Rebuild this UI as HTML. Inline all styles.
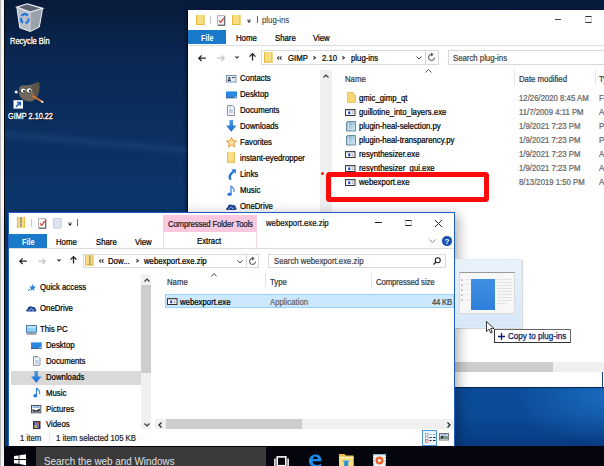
<!DOCTYPE html>
<html><head><meta charset="utf-8">
<style>
*{margin:0;padding:0;box-sizing:border-box}
html,body{width:604px;height:466px;overflow:hidden}
body{position:relative;font-family:"Liberation Sans",sans-serif;color:#000;
background:
 linear-gradient(185deg, rgba(0,0,0,0) 0px, rgba(0,0,0,0) 179px, rgba(100,160,230,0.10) 186px, rgba(0,0,0,0) 193px),
 linear-gradient(180deg,#081a3a 0px,#0a2853 60px,#0b2f5f 130px,#0b376e 215px,#0b3f7c 466px);}
.a{position:absolute}
.t{position:absolute;font-size:8.2px;line-height:10.1px;white-space:nowrap;-webkit-text-stroke:0.22px currentColor;transform:scaleX(0.95);transform-origin:0 0}
.g{color:#656565}
svg{position:absolute;overflow:visible}
</style></head><body>

<!-- left strip of another window -->
<div class="a" style="left:0;top:0;width:1px;height:466px;background:#b9b9b9"></div>
<div class="a" style="left:1px;top:0;width:3px;height:466px;background:#f4f4f4"></div>
<div class="a" style="left:4px;top:0;width:1px;height:466px;background:#050a12"></div>

<!-- wallpaper bottom-right brighter -->
<div class="a" style="left:454px;top:380px;width:150px;height:66px;background:radial-gradient(ellipse 90px 50px at 150px 15px,rgba(40,130,220,0.55),rgba(40,130,220,0) 100%),linear-gradient(180deg,#0a4d9a 0%,#0a4a96 55%,#083a80 100%)"></div>

<!-- Desktop icons -->
<svg style="left:0;top:0" width="60" height="50" viewBox="0 0 60 50">
  <path d="M16.8 7.1 L30.2 12 L30.2 31.5 L19.8 27.8Z" fill="#b9bfc7"/>
  <path d="M30.2 12 L42.6 8.3 L39.3 27 L30.2 31.5Z" fill="#9aa2ac"/>
  <path d="M16.8 7.1 L27.3 3.8 L42.6 8.3 L30.2 12Z" fill="#59626e" stroke="#e6e9ed" stroke-width="1.2"/>
  <path d="M16.8 7.1 L19.8 27.8 L30.2 31.5 L39.3 27 L42.6 8.3" fill="none" stroke="#eef0f3" stroke-width="1"/>
  <path d="M30.2 12 V31.5" stroke="#e0e3e7" stroke-width=".8"/>
  <path d="M21.5 16 A4 4 0 0 1 28 15.5" stroke="#1d74e0" stroke-width="2.2" fill="none"/>
  <path d="M28.5 18.5 A4 4 0 0 1 25.5 23" stroke="#1d74e0" stroke-width="2.2" fill="none"/>
  <path d="M23 22.5 A4 4 0 0 1 21 18" stroke="#1d74e0" stroke-width="2.2" fill="none"/>
</svg>
<div class="t" style="left:10.4px;top:35.9px;font-size:8.7px;color:#fff;transform:scaleX(0.865);transform-origin:0 0;-webkit-text-stroke:0.35px #fff;text-shadow:0 0 1px #000,1px 1px 1px #000">Recycle Bin</div>

<svg style="left:0;top:0" width="60" height="130" viewBox="0 0 60 130">
  <path d="M19 89 C19 85.5 23 84.5 27 85.5 C31 85 35.5 83.5 38.8 81.8 C40.5 88 39 97 33.5 100.5 C28 103 20.5 100 19 94 Z" fill="#70685a"/>
  <path d="M31 86 C34 85 36.5 83.5 38.8 81.8 C40 88 38.5 95 34.5 98.5 C35 93 33.5 89 31 86Z" fill="#5b5447"/>
  <path d="M16.5 92 L21 91" stroke="#2a2620" stroke-width="1.2"/>
  <circle cx="16.2" cy="92" r="1.6" fill="#f2f2f2"/>
  <ellipse cx="23.3" cy="90.6" rx="2.8" ry="2.5" fill="#fff" stroke="#2a2620" stroke-width=".7"/>
  <ellipse cx="29.2" cy="90.4" rx="2.9" ry="2.6" fill="#fff" stroke="#2a2620" stroke-width=".7"/>
  <circle cx="24" cy="91" r="1.1" fill="#111"/><circle cx="30" cy="90.8" r="1.1" fill="#111"/>
  <path d="M32 95.5 L41.5 101.3" stroke="#d9772b" stroke-width="1.8"/>
  <path d="M41 101 L43.3 102.4" stroke="#ece6da" stroke-width="1.8"/>
  <rect x="13.5" y="100.2" width="9.5" height="8.4" fill="#fdfdfd"/>
  <path d="M16 106.8 L20 102.8 M17 102.6 H20.3 V105.8" stroke="#1f5fc4" stroke-width="1.5" fill="none"/>
</svg>
<div class="t" style="left:8.1px;top:110.5px;font-size:8.7px;color:#fff;transform:scaleX(0.84);transform-origin:0 0;-webkit-text-stroke:0.35px #fff;text-shadow:0 0 1px #000,1px 1px 1px #000">GIMP 2.10.22</div>

<!-- ================= BACK WINDOW ================= -->
<div class="a" id="bw" style="left:187px;top:10px;width:417px;height:377px;background:#fff;border-left:1px solid #050505;box-shadow:-2px 0 3px rgba(0,0,0,0.25);"></div>

<!-- title row -->
<svg style="left:195.5px;top:14.6px" width="8.5" height="10" viewBox="0 0 8.5 10"><rect x="0" y="0" width="8.5" height="10" fill="#f8dc80"/><rect x="0" y="0" width="1" height="10" fill="#e8b93c"/><rect x="7.3" y="0" width="1.2" height="10" fill="#e9c04e"/><rect x="0" y="9" width="8.5" height="1" fill="#e8b93c"/></svg>
<div class="a" style="left:209.5px;top:16px;width:1px;height:8px;background:#c8c8c8"></div>
<svg style="left:217px;top:14.5px" width="8.5" height="10.5" viewBox="0 0 8.5 10.5"><path d="M0.5 0.5 H7.5 V10 H0.5Z" fill="#f7f7f7" stroke="#b5b5b5"/><path d="M7.8 1 V10.3 H1" stroke="#555" stroke-width="1" fill="none"/><path d="M2 5.5 L3.8 7.3 L6.8 3" stroke="#d33a2a" stroke-width="1.2" fill="none"/></svg>
<svg style="left:231.6px;top:14.6px" width="8.5" height="10" viewBox="0 0 8.5 10"><rect x="0" y="0" width="8.5" height="10" fill="#f8dc80"/><rect x="0" y="0" width="1" height="10" fill="#e8b93c"/><rect x="7.3" y="0" width="1.2" height="10" fill="#e9c04e"/><rect x="0" y="9" width="8.5" height="1" fill="#e8b93c"/></svg>
<svg style="left:246.5px;top:18.5px" width="4" height="4" viewBox="0 0 4 4"><path d="M0 0.5 H4" stroke="#aaa" stroke-width=".8"/><path d="M0 1.6 L4 1.6 L2 3.9Z" fill="#222"/></svg>
<div class="a" style="left:256.5px;top:16px;width:1px;height:6.5px;background:#666"></div>
<div class="t" style="left:262px;top:16px;color:#444;-webkit-text-stroke:0.1px #444">plug-ins</div>
<div class="a" style="left:555px;top:19px;width:6px;height:1px;background:#444"></div>
<div class="a" style="left:584.5px;top:16px;width:7px;height:7px;border:1px solid #d0d0d0;border-top-color:#333;border-bottom-color:#333"></div>

<!-- ribbon tabs -->
<div class="a" style="left:188px;top:30.3px;width:38px;height:14.2px;background:#1979ca"></div>
<div class="t" style="left:201px;top:34.1px;color:#fff;font-weight:bold;font-size:8.2px;transform:scaleX(0.88);-webkit-text-stroke:0px #fff">File</div>
<div class="t" style="left:235.6px;top:34.1px">Home</div>
<div class="t" style="left:275px;top:34.1px">Share</div>
<div class="t" style="left:313px;top:34.1px">View</div>
<div class="a" style="left:189px;top:45px;width:415px;height:1px;background:#dadbdc"></div>

<!-- nav row -->
<svg style="left:197.5px;top:54.5px" width="8" height="6.5" viewBox="0 0 8 6.5"><path d="M7.8 3.2 H0.8 M3.6 0.4 L0.8 3.2 L3.6 6" stroke="#222" stroke-width="1.25" fill="none"/></svg>
<svg style="left:217px;top:54.5px" width="8" height="6.5" viewBox="0 0 8 6.5"><path d="M0.2 3.2 H7.2 M4.4 0.4 L7.2 3.2 L4.4 6" stroke="#c4c4c4" stroke-width="1.2" fill="none"/></svg>
<svg style="left:235px;top:56px" width="4" height="2.5" viewBox="0 0 4 2.5"><path d="M0.4 0.4 L2 2 L3.6 0.4" stroke="#333" stroke-width="1.2" fill="none"/></svg>
<svg style="left:248.5px;top:53px" width="7" height="7.5" viewBox="0 0 7 7.5"><path d="M3.5 7.5 V0.8 M0.5 3.6 L3.5 0.6 L6.5 3.6" stroke="#222" stroke-width="1.3" fill="none"/></svg>
<div class="a" style="left:261px;top:50px;width:178px;height:15px;border:1px solid #d9d9d9;background:#fff"></div>
<div class="a" style="left:425px;top:51px;width:1px;height:13px;background:#d9d9d9"></div>
<svg style="left:264px;top:52px" width="8.5" height="10.5" viewBox="0 0 8.5 10.5"><rect x="0" y="0" width="8.5" height="10.5" fill="#f8dc80"/><rect x="0" y="0" width="1" height="10.5" fill="#e8b93c"/><rect x="7.3" y="0" width="1.2" height="10.5" fill="#e9c04e"/><rect x="0" y="9.5" width="8.5" height="1" fill="#e8b93c"/></svg>
<svg style="left:277.2px;top:56.3px" width="5" height="4" viewBox="0 0 5 4"><path d="M2 0.3 L0.5 2 L2 3.7 M4.5 0.3 L3 2 L4.5 3.7" stroke="#333" stroke-width="1.1" fill="none"/></svg>
<div class="t" style="left:287.5px;top:53.5px">GIMP</div>
<svg style="left:312.6px;top:56px" width="3" height="3.6" viewBox="0 0 3 3.6"><path d="M0.4 0.3 L2.4 1.8 L0.4 3.3" stroke="#333" stroke-width="1.1" fill="none"/></svg>
<div class="t" style="left:321.5px;top:53.5px">2.10</div>
<svg style="left:341.8px;top:56px" width="3" height="3.6" viewBox="0 0 3 3.6"><path d="M0.4 0.3 L2.4 1.8 L0.4 3.3" stroke="#333" stroke-width="1.1" fill="none"/></svg>
<div class="t" style="left:351px;top:53.5px">plug-ins</div>
<svg style="left:416px;top:56px" width="6" height="4" viewBox="0 0 6 4"><path d="M0.5 0.5 L3 3 L5.5 0.5" stroke="#444" stroke-width="1" fill="none"/></svg>
<svg style="left:428px;top:53px" width="8" height="9" viewBox="0 0 8 9"><path d="M6.5 4.5 A3 3 0 1 1 4 1.5" stroke="#444" stroke-width="1" fill="none"/><path d="M3 0 L5.2 1.5 L3 3" stroke="#444" stroke-width="1" fill="none"/></svg>
<div class="a" style="left:447.5px;top:50px;width:170px;height:15px;border:1px solid #d9d9d9;background:#fff"></div>
<div class="t" style="left:453px;top:53.5px;color:#444">Search plug-ins</div>

<!-- nav pane -->
<div class="a" style="left:320px;top:70px;width:12px;height:320px;background:#f0f0f0"></div>
<svg style="left:323px;top:74px" width="6" height="4" viewBox="0 0 6 4"><path d="M0.5 3.5 L3 1 L5.5 3.5" stroke="#333" stroke-width="1.1" fill="none"/></svg>
<div class="t" style="left:240.3px;top:74.0px">Contacts</div>
<div class="t" style="left:240.3px;top:90.1px">Desktop</div>
<div class="t" style="left:240.3px;top:106.0px">Documents</div>
<div class="t" style="left:240.3px;top:121.6px">Downloads</div>
<div class="t" style="left:240.3px;top:138.0px">Favorites</div>
<div class="t" style="left:240.3px;top:153.6px">instant-eyedropper</div>
<div class="t" style="left:240.3px;top:169.8px">Links</div>
<div class="t" style="left:240.3px;top:186.0px">Music</div>
<div class="t" style="left:240.3px;top:201.6px">OneDrive</div>
<!-- nav icons -->

<svg style="left:226.2px;top:75.3px" width="10.5" height="7.5" viewBox="0 0 10.5 7.5"><rect x="0.5" y="0.5" width="9.5" height="6.5" fill="#e4eef8" stroke="#7894b4"/><circle cx="3.3" cy="3" r="1.1" fill="#2e3440"/><rect x="1.8" y="4.4" width="3" height="1.6" fill="#2e3440"/><path d="M6 2.6 H8.8" stroke="#3a4050" stroke-width="1"/></svg>
<svg style="left:226.2px;top:90.9px" width="11" height="7.2" viewBox="0 0 11 7.2"><rect x="0" y="0" width="11" height="7.2" fill="#2a86e0"/><rect x="0" y="0" width="11" height="1" fill="#7dbdf3"/><rect x="0" y="6.2" width="11" height="1" fill="#3c5a80"/><rect x="8.5" y="5.6" width="2" height="1" fill="#dfe8f0"/></svg>
<svg style="left:227.3px;top:105px" width="8" height="11" viewBox="0 0 8 11"><path d="M0.5 0.5 H5.5 L7.5 2.5 V10.5 H0.5Z" fill="#fbfbfb" stroke="#8a919b"/><rect x="2" y="4" width="4" height="4.5" fill="#b9d2ec"/><path d="M2.5 2.5 L4 1.5" stroke="#4a8ad0" stroke-width=".8"/></svg>
<svg style="left:226.2px;top:120.2px" width="10.5" height="12" viewBox="0 0 10.5 12"><defs><linearGradient id="dl" x1="0" y1="0" x2="0" y2="1"><stop offset="0" stop-color="#4a9be8"/><stop offset="1" stop-color="#1b6ad0"/></linearGradient></defs><path d="M3.5 0 H7 V5.6 H10.5 L5.25 11.8 L0 5.6 H3.5Z" fill="url(#dl)"/></svg>
<svg style="left:226px;top:137.3px" width="11" height="10.5" viewBox="0 0 11 10.5"><path d="M5.5 0.4 L7 3.8 L10.6 4 L7.8 6.4 L8.8 10 L5.5 8 L2.2 10 L3.2 6.4 L0.4 4 L4 3.8Z" fill="#fbe2a6" stroke="#de8f33" stroke-width=".9"/></svg>
<svg style="left:227px;top:152.4px" width="8" height="10.7" viewBox="0 0 8 10.7"><rect x="0" y="0" width="8" height="10.7" fill="#f9de87"/><rect x="0" y="0" width="1" height="10.7" fill="#eac04f"/><rect x="6.8" y="0" width="1.2" height="10.7" fill="#eac25a"/><rect x="0" y="9.7" width="8" height="1" fill="#e6b845"/></svg>
<svg style="left:227.5px;top:168.8px" width="8" height="11" viewBox="0 0 8 11"><path d="M3.2 0.2 H7.8 V4.8 L6.3 3.3 L4 5.6 C2.8 6.8 2.8 8.5 3.6 10.8 L1.2 10.8 C0 8.5 0.2 6 2.4 3.8 L4.7 1.7Z" fill="#2477d9"/></svg>
<svg style="left:227px;top:184.5px" width="9" height="12" viewBox="0 0 9 12"><path d="M4 1 V9" stroke="#2a7dde" stroke-width="1.2"/><ellipse cx="2.6" cy="9.3" rx="2.2" ry="1.8" fill="#2a7dde"/><path d="M4 1 C6 3 8 3.5 7 7" stroke="#2a7dde" stroke-width="1.1" fill="none"/></svg>
<svg style="left:226px;top:202.5px" width="10.5" height="7.2" viewBox="0 0 10.5 7.2"><path d="M1 7 C-0.3 7 -0.2 4.4 1.6 4.5 C1.8 2 4.4 0.5 6.3 2.3 C8.2 1.6 10 2.8 9.7 4.6 C10.9 4.8 10.8 7 9.4 7Z" fill="#173f90"/><path d="M3 6.3 C3.4 4.6 4.8 3.6 6.3 4.2 M6 6.3 C6.3 5.2 7.4 4.8 8.4 5.2" stroke="#e8eef8" stroke-width=".8" fill="none"/></svg>

<svg style="left:425px;top:69px" width="7" height="4" viewBox="0 0 7 4"><path d="M0.5 3.5 L3.5 0.5 L6.5 3.5" stroke="#555" stroke-width="1" fill="none"/></svg>
<div class="t" style="left:344.6px;top:74.7px;color:#333a48">Name</div>
<div class="a" style="left:514px;top:70px;width:1px;height:16px;background:#e5e5e5"></div>
<div class="t" style="left:518.7px;top:74.7px;color:#333a48">Date modified</div>
<div class="a" style="left:594.5px;top:70px;width:1px;height:16px;background:#e5e5e5"></div>
<div class="t" style="left:599px;top:74.7px;color:#333a48">Type</div>
<div class="t" style="left:358.8px;top:94.00px">gmic_gimp_qt</div>
<div class="t g" style="left:518.9px;top:94.00px">12/26/2020 8:45 AM</div>
<div class="t g" style="left:598.6px;top:94.00px">File folder</div>
<svg style="left:346.5px;top:92.10px" width="9" height="11" viewBox="0 0 9 11"><path d="M0.5 0.5 H6.5 V3 H8.5 V10.5 H0.5Z" fill="#f7d774" stroke="#e9c45a"/></svg>
<div class="t" style="left:358.8px;top:108.05px">guillotine_into_layers.exe</div>
<div class="t g" style="left:518.9px;top:108.05px">11/7/2009 4:11 PM</div>
<div class="t g" style="left:598.6px;top:108.05px">Application</div>
<svg style="left:345.3px;top:109.15px" width="10.5" height="7" viewBox="0 0 10.5 7"><rect x="0.5" y="0.5" width="9.5" height="6" fill="#fff" stroke="#33343c"/><rect x="0.5" y="0.5" width="9.5" height="0.8" fill="#55565e"/><rect x="3.2" y="2.4" width="2" height="2.8" fill="#1a3cc0"/><rect x="6.5" y="2.5" width="2" height="0.9" fill="#8a8a8a"/><rect x="6.5" y="4.3" width="2" height="0.9" fill="#8a8a8a"/></svg>
<div class="t" style="left:358.8px;top:122.10px">plugin-heal-selection.py</div>
<div class="t g" style="left:518.9px;top:122.10px">1/9/2021 7:23 PM</div>
<div class="t g" style="left:598.6px;top:122.10px">PY File</div>
<svg style="left:346px;top:120.70px" width="10" height="10.5" viewBox="0 0 10 10.5"><defs><linearGradient id="pyg" x1="0" y1="0" x2="1" y2="1"><stop offset="0" stop-color="#7fa6c2"/><stop offset=".6" stop-color="#b7d5e6"/><stop offset="1" stop-color="#d9ebf4"/></linearGradient></defs><path d="M1.5 0.5 H9.5 V10 H0.5 V1.5Z" fill="url(#pyg)" stroke="#5f839e" stroke-width=".9"/><path d="M2.3 2 V8.8" stroke="#e8f3fa" stroke-width=".9"/></svg>
<div class="t" style="left:358.8px;top:136.15px">plugin-heal-transparency.py</div>
<div class="t g" style="left:518.9px;top:136.15px">1/9/2021 7:23 PM</div>
<div class="t g" style="left:598.6px;top:136.15px">PY File</div>
<svg style="left:346px;top:134.75px" width="10" height="10.5" viewBox="0 0 10 10.5"><defs><linearGradient id="pyg" x1="0" y1="0" x2="1" y2="1"><stop offset="0" stop-color="#7fa6c2"/><stop offset=".6" stop-color="#b7d5e6"/><stop offset="1" stop-color="#d9ebf4"/></linearGradient></defs><path d="M1.5 0.5 H9.5 V10 H0.5 V1.5Z" fill="url(#pyg)" stroke="#5f839e" stroke-width=".9"/><path d="M2.3 2 V8.8" stroke="#e8f3fa" stroke-width=".9"/></svg>
<div class="t" style="left:358.8px;top:150.20px">resynthesizer.exe</div>
<div class="t g" style="left:518.9px;top:150.20px">1/9/2021 7:23 PM</div>
<div class="t g" style="left:598.6px;top:150.20px">Application</div>
<svg style="left:345.3px;top:151.30px" width="10.5" height="7" viewBox="0 0 10.5 7"><rect x="0.5" y="0.5" width="9.5" height="6" fill="#fff" stroke="#33343c"/><rect x="0.5" y="0.5" width="9.5" height="0.8" fill="#55565e"/><rect x="3.2" y="2.4" width="2" height="2.8" fill="#1a3cc0"/><rect x="6.5" y="2.5" width="2" height="0.9" fill="#8a8a8a"/><rect x="6.5" y="4.3" width="2" height="0.9" fill="#8a8a8a"/></svg>
<div class="t" style="left:358.8px;top:164.25px">resynthesizer_gui.exe</div>
<div class="t g" style="left:518.9px;top:164.25px">1/9/2021 7:23 PM</div>
<div class="t g" style="left:598.6px;top:164.25px">Application</div>
<svg style="left:345.3px;top:165.35px" width="10.5" height="7" viewBox="0 0 10.5 7"><rect x="0.5" y="0.5" width="9.5" height="6" fill="#fff" stroke="#33343c"/><rect x="0.5" y="0.5" width="9.5" height="0.8" fill="#55565e"/><rect x="3.2" y="2.4" width="2" height="2.8" fill="#1a3cc0"/><rect x="6.5" y="2.5" width="2" height="0.9" fill="#8a8a8a"/><rect x="6.5" y="4.3" width="2" height="0.9" fill="#8a8a8a"/></svg>
<div class="t" style="left:358.8px;top:178.30px">webexport.exe</div>
<div class="t g" style="left:518.9px;top:178.30px">8/13/2019 1:50 PM</div>
<div class="t g" style="left:598.6px;top:178.30px">Application</div>
<svg style="left:345.3px;top:179.40px" width="10.5" height="7" viewBox="0 0 10.5 7"><rect x="0.5" y="0.5" width="9.5" height="6" fill="#fff" stroke="#33343c"/><rect x="0.5" y="0.5" width="9.5" height="0.8" fill="#55565e"/><rect x="3.2" y="2.4" width="2" height="2.8" fill="#1a3cc0"/><rect x="6.5" y="2.5" width="2" height="0.9" fill="#8a8a8a"/><rect x="6.5" y="4.3" width="2" height="0.9" fill="#8a8a8a"/></svg>

<div class="a" style="left:454px;top:362px;width:150px;height:10px;background:#f0f0f0"></div>
<div class="a" style="left:454px;top:362px;width:99px;height:10px;background:#cdcdcd"></div>
<div class="a" style="left:602px;top:372px;width:1px;height:15px;background:#1b3d8a"></div>
<div class="a" style="left:188px;top:387px;width:416px;height:1px;background:#0a2553"></div>


<!-- red rectangle -->
<div class="a" style="left:326px;top:172px;width:162.5px;height:29.5px;border:5px solid #fa0c0c;border-radius:3.5px"></div>
<div class="a" style="left:321px;top:171.7px;width:3px;height:3px;border-radius:50%;background:#ee2020"></div>

<!-- ================= FRONT WINDOW ================= -->
<div class="a" style="left:8px;top:212px;width:447px;height:234px;background:#fff;border:1px solid #1f5fc4;border-bottom:none;box-shadow:3px 3px 12px rgba(0,0,0,0.35)"></div>
<!-- QAT -->
<svg style="left:16.9px;top:217px" width="8" height="11" viewBox="0 0 8 11"><rect x="0" y="0" width="8" height="11" fill="#f8dc80"/><rect x="0" y="0" width="1" height="11" fill="#e8b93c"/><rect x="7" y="0" width="1" height="11" fill="#e9c04e"/><path d="M4 0.5 V10.5" stroke="#4a5a9a" stroke-width="1.4" stroke-dasharray="1.2 0.8"/></svg>
<div class="a" style="left:30.5px;top:219px;width:1px;height:8px;background:#c8c8c8"></div>
<svg style="left:38.4px;top:218px" width="8.5" height="10.5" viewBox="0 0 8.5 10.5"><path d="M0.5 0.5 H7.5 V10 H0.5Z" fill="#f7f7f7" stroke="#b5b5b5"/><path d="M7.8 1 V10.3 H1" stroke="#555" stroke-width="1" fill="none"/><path d="M2 5.5 L3.8 7.3 L6.8 3" stroke="#d33a2a" stroke-width="1.2" fill="none"/></svg>
<svg style="left:53px;top:218px" width="8.6" height="10.5" viewBox="0 0 8.6 10.5"><rect x="0" y="0" width="8.6" height="10.5" fill="#dde4f1"/><path d="M0.5 0.5 H8.1 V10 H0.5Z" fill="none" stroke="#c5cfe2"/></svg>
<svg style="left:67.6px;top:222px" width="4" height="4" viewBox="0 0 4 4"><path d="M0 0.5 H4" stroke="#aaa" stroke-width=".8"/><path d="M0 1.6 L4 1.6 L2 3.9Z" fill="#222"/></svg>
<div class="a" style="left:77.3px;top:218.6px;width:1px;height:7.5px;background:#666"></div>
<div class="a" style="left:163px;top:215px;width:94px;height:17px;background:#f9c8de"></div>
<div class="t" style="left:168px;top:220.2px;color:#1a1a1a;letter-spacing:-0.17px">Compressed Folder Tools</div>
<div class="t" style="left:266px;top:219.3px;color:#111">webexport.exe.zip</div>
<div class="a" style="left:404.5px;top:219.5px;width:7px;height:6.5px;border:1px solid #c8c8c8;border-top-color:#222;border-bottom-color:#222"></div>
<svg style="left:435px;top:219.5px" width="7" height="7" viewBox="0 0 7 7"><path d="M0 0 L7 7 M7 0 L0 7" stroke="#222" stroke-width="1"/></svg>
<div class="a" style="left:375px;top:222px;width:7px;height:1px;background:#222"></div>
<!-- tabs -->
<div class="a" style="left:9px;top:233.5px;width:38px;height:14.5px;background:#1979ca"></div>
<div class="t" style="left:22.4px;top:237.6px;color:#fff;font-weight:bold;font-size:8.2px;transform:scaleX(0.88);-webkit-text-stroke:0px #fff">File</div>
<div class="t" style="left:56px;top:237.6px">Home</div>
<div class="t" style="left:95.5px;top:237.6px">Share</div>
<div class="t" style="left:135px;top:237.6px">View</div>
<div class="a" style="left:163px;top:232px;width:94px;height:16.5px;border:1px solid #f2dbe6;border-top:none;border-bottom:none"></div>
<div class="t" style="left:196.5px;top:237.2px">Extract</div>
<svg style="left:429px;top:238.5px" width="7" height="4" viewBox="0 0 7 4"><path d="M0.5 0.5 L3.5 3.5 L6.5 0.5" stroke="#888" fill="none"/></svg>
<svg style="left:441.5px;top:235.5px" width="10" height="10" viewBox="0 0 10 10"><circle cx="5" cy="5" r="4.8" fill="#1752b8" stroke="#0d3d94" stroke-width=".6"/><text x="5" y="8.4" font-family="Liberation Sans" font-weight="bold" font-size="8" fill="#fff" text-anchor="middle">?</text></svg>
<div class="a" style="left:9px;top:248px;width:445px;height:1px;background:#dadbdc"></div>
<!-- nav row -->
<svg style="left:18.7px;top:257.5px" width="8" height="6.5" viewBox="0 0 8 6.5"><path d="M7.8 3.2 H0.8 M3.6 0.4 L0.8 3.2 L3.6 6" stroke="#222" stroke-width="1.25" fill="none"/></svg>
<svg style="left:38.2px;top:257.5px" width="8" height="6.5" viewBox="0 0 8 6.5"><path d="M0.2 3.2 H7.2 M4.4 0.4 L7.2 3.2 L4.4 6" stroke="#c4c4c4" stroke-width="1.2" fill="none"/></svg>
<svg style="left:56.5px;top:259px" width="4" height="2.5" viewBox="0 0 4 2.5"><path d="M0.4 0.4 L2 2 L3.6 0.4" stroke="#333" stroke-width="1.2" fill="none"/></svg>
<svg style="left:70px;top:256px" width="7" height="7.5" viewBox="0 0 7 7.5"><path d="M3.5 7.5 V0.8 M0.5 3.6 L3.5 0.6 L6.5 3.6" stroke="#222" stroke-width="1.3" fill="none"/></svg>
<div class="a" style="left:82.5px;top:253.5px;width:176px;height:14px;border:1px solid #d9d9d9"></div>
<div class="a" style="left:246px;top:255px;width:1px;height:11.5px;background:#d9d9d9"></div>
<svg style="left:85px;top:255.2px" width="8.5" height="10.5" viewBox="0 0 8.5 10.5"><rect x="0" y="0" width="8.5" height="10.5" fill="#f8dc80"/><rect x="0" y="0" width="1" height="10.5" fill="#e8b93c"/><rect x="7.3" y="0" width="1.2" height="10.5" fill="#e9c04e"/><rect x="0" y="9.5" width="8.5" height="1" fill="#e8b93c"/><path d="M4.8 0.5 V10" stroke="#5a6aa8" stroke-width="1.3" stroke-dasharray="1.2 0.8"/></svg>
<svg style="left:99px;top:259.3px" width="5" height="4" viewBox="0 0 5 4"><path d="M2 0.3 L0.5 2 L2 3.7 M4.5 0.3 L3 2 L4.5 3.7" stroke="#333" stroke-width="1.1" fill="none"/></svg>
<div class="t" style="left:108px;top:256.8px">Dow...</div>
<svg style="left:136px;top:259px" width="3" height="3.6" viewBox="0 0 3 3.6"><path d="M0.4 0.3 L2.4 1.8 L0.4 3.3" stroke="#333" stroke-width="1.1" fill="none"/></svg>
<div class="t" style="left:144px;top:256.8px">webexport.exe.zip</div>
<svg style="left:236.5px;top:259.5px" width="6" height="4" viewBox="0 0 6 4"><path d="M0.5 0.5 L3 3 L5.5 0.5" stroke="#444" fill="none"/></svg>
<svg style="left:249px;top:256.5px" width="8" height="9" viewBox="0 0 8 9"><path d="M6.5 4.5 A3 3 0 1 1 4 1.5" stroke="#444" fill="none"/><path d="M3 0 L5.2 1.5 L3 3" stroke="#444" fill="none"/></svg>
<div class="a" style="left:268px;top:253.5px;width:177.5px;height:14px;border:1px solid #d9d9d9"></div>
<div class="t" style="left:273.8px;top:256.8px;color:#444">Search webexport.exe.zip</div>
<svg style="left:433px;top:256.5px" width="8" height="8" viewBox="0 0 8 8"><circle cx="4.8" cy="3.2" r="2.5" fill="none" stroke="#222" stroke-width="1.1"/><path d="M3 5 L0.5 7.5" stroke="#222" stroke-width="1.3"/></svg>
<!-- nav pane -->
<div class="a" style="left:141px;top:274px;width:10px;height:155px;background:#f0f0f0"></div>
<div class="a" style="left:141px;top:284.5px;width:10px;height:88px;background:#cdcdcd"></div>
<svg style="left:144px;top:278px" width="6" height="4" viewBox="0 0 6 4"><path d="M0.5 3.5 L3 1 L5.5 3.5" stroke="#333" stroke-width="1.1" fill="none"/></svg>
<svg style="left:143.5px;top:422.5px" width="6" height="4" viewBox="0 0 6 4"><path d="M0.5 0.5 L3 3 L5.5 0.5" stroke="#333" stroke-width="1.1" fill="none"/></svg>
<div class="a" style="left:11px;top:370.5px;width:130px;height:14px;background:#d9d9d9"></div>
<div class="t" style="left:40.0px;top:282.6px">Quick access</div>
<div class="t" style="left:40.0px;top:303.6px">OneDrive</div>
<div class="t" style="left:40.0px;top:324.8px">This PC</div>
<div class="t" style="left:46.0px;top:340.6px">Desktop</div>
<div class="t" style="left:46.0px;top:356.6px">Documents</div>
<div class="t" style="left:46.0px;top:372.6px">Downloads</div>
<div class="t" style="left:46.0px;top:388.6px">Music</div>
<div class="t" style="left:46.0px;top:404.6px">Pictures</div>
<div class="t" style="left:46.0px;top:420.4px">Videos</div>

<svg style="left:28.2px;top:284px" width="8" height="7" viewBox="0 0 8 7"><path d="M4.6 0 L5.5 2.4 L8 2.6 L6.1 4.2 L6.7 6.8 L4.6 5.4 L2.5 6.8 L3.1 4.2 L1.2 2.6 L3.7 2.4Z" fill="#2d7fd8"/><path d="M0 6.8 L2.6 4.6" stroke="#2d7fd8" stroke-width="1"/></svg>
<svg style="left:26px;top:305px" width="10.5" height="6.8" viewBox="0 0 10.5 6.8"><path d="M1 6.6 C-0.3 6.6 -0.2 4.1 1.6 4.2 C1.8 1.8 4.4 0.4 6.3 2.1 C8.2 1.5 10 2.6 9.7 4.3 C10.9 4.5 10.8 6.6 9.4 6.6Z" fill="#173f90"/><path d="M3 6 C3.4 4.3 4.8 3.4 6.3 4 M6 6 C6.3 4.9 7.4 4.5 8.4 4.9" stroke="#e8eef8" stroke-width=".8" fill="none"/></svg>
<svg style="left:26px;top:325px" width="11" height="9.5" viewBox="0 0 11 9.5"><rect x="0.5" y="0.5" width="10" height="6.8" fill="#8fd0f5" stroke="#4a7fae"/><rect x="1.3" y="1.3" width="8.4" height="1.5" fill="#c4e8fb"/><rect x="4.5" y="7.3" width="2" height="1" fill="#7a8a9a"/><rect x="0.5" y="8.5" width="10" height="1" fill="#555d66"/></svg>
<svg style="left:31.2px;top:342.2px" width="10.7" height="6.8" viewBox="0 0 10.7 6.8"><rect x="0" y="0" width="10.7" height="6.8" fill="#2a86e0"/><rect x="0" y="0" width="10.7" height="1" fill="#7dbdf3"/><rect x="0" y="5.8" width="10.7" height="1" fill="#3c5a80"/><rect x="8.3" y="5.2" width="2" height="1" fill="#dfe8f0"/></svg>
<svg style="left:32.9px;top:356.4px" width="7.5" height="9.8" viewBox="0 0 7.5 9.8"><path d="M0.5 0.5 H5 L7 2.5 V9.3 H0.5Z" fill="#fbfbfb" stroke="#8a919b"/><rect x="2" y="3.8" width="3.6" height="4" fill="#b9d2ec"/><path d="M2.3 2.4 L3.8 1.4" stroke="#4a8ad0" stroke-width=".8"/></svg>
<svg style="left:31.2px;top:371.3px" width="10.5" height="12" viewBox="0 0 10.5 12"><path d="M3.5 0 H7 V5.6 H10.5 L5.25 11.8 L0 5.6 H3.5Z" fill="url(#dl)"/></svg>
<svg style="left:33px;top:387px" width="8" height="11" viewBox="0 0 8 11"><path d="M3.5 1 V8.5" stroke="#2a7dde" stroke-width="1.2"/><ellipse cx="2.3" cy="8.8" rx="2" ry="1.7" fill="#2a7dde"/><path d="M3.5 1 C5.5 3 7.5 3.5 6.5 7" stroke="#2a7dde" stroke-width="1.1" fill="none"/></svg>
<svg style="left:31.2px;top:405px" width="10.3" height="8.3" viewBox="0 0 10.3 8.3"><rect x="0.5" y="0.5" width="9.3" height="7.3" fill="#fff" stroke="#4a505a"/><rect x="1.5" y="1.6" width="7.3" height="1" fill="#3b78c8"/><path d="M1.5 6.8 V4 L5 5.5 L8.8 3.6 V6.8Z" fill="#2a3444"/></svg>
<svg style="left:32.9px;top:420.8px" width="7.5" height="8" viewBox="0 0 7.5 8"><rect x="0" y="0" width="7.5" height="8" fill="#343048"/><rect x="1.5" y="1" width="4.5" height="6" fill="#5d7ad0"/><rect x="1.5" y="4" width="2.2" height="3" fill="#e8b23a"/><rect x="3.7" y="1" width="2.3" height="2.5" fill="#d65a3a"/></svg>
<!-- content pane -->
<svg style="left:211px;top:272.5px" width="6" height="4" viewBox="0 0 6 4"><path d="M0.5 3.5 L3 0.5 L5.5 3.5" stroke="#555" fill="none"/></svg>
<div class="t" style="left:166.5px;top:278.2px;color:#333a48">Name</div>
<div class="a" style="left:264.5px;top:273px;width:1px;height:16px;background:#e5e5e5"></div>
<div class="t" style="left:269.8px;top:278.2px;color:#333a48">Type</div>
<div class="a" style="left:371px;top:273px;width:1px;height:16px;background:#e5e5e5"></div>
<div class="t" style="left:376.4px;top:278.2px;color:#333a48;letter-spacing:-0.11px">Compressed size</div>
<div class="a" style="left:164.5px;top:294px;width:289px;height:14.3px;background:#cce8ff;border:1px solid #99d1ff"></div>
<svg style="left:166.5px;top:298px" width="10.5" height="7" viewBox="0 0 10.5 7"><rect x="0.5" y="0.5" width="9.5" height="6" fill="#fff" stroke="#33343c"/><rect x="0.5" y="0.5" width="9.5" height="0.8" fill="#55565e"/><rect x="3.2" y="2.4" width="2" height="2.8" fill="#1a3cc0"/><rect x="6.5" y="2.5" width="2" height="0.9" fill="#8a8a8a"/><rect x="6.5" y="4.3" width="2" height="0.9" fill="#8a8a8a"/></svg>
<div class="t" style="left:179.7px;top:297.7px">webexport.exe</div>
<div class="t g" style="left:269.8px;top:297.7px">Application</div>
<div class="t g" style="left:432.4px;top:297.7px;color:#444;letter-spacing:-0.25px">44 KB</div>
<!-- h scrollbar -->
<div class="a" style="left:155px;top:419px;width:299px;height:10px;background:#f0f0f0"></div>
<div class="a" style="left:166px;top:419px;width:136px;height:10px;background:#cdcdcd"></div>
<svg style="left:158px;top:421.5px" width="4" height="6" viewBox="0 0 4 6"><path d="M3.5 0.5 L1 3 L3.5 5.5" stroke="#222" stroke-width="1.2" fill="none"/></svg>
<svg style="left:446.5px;top:421.5px" width="4" height="6" viewBox="0 0 4 6"><path d="M0.5 0.5 L3 3 L0.5 5.5" stroke="#222" stroke-width="1.2" fill="none"/></svg>
<!-- status bar -->
<div class="t" style="left:20px;top:434.2px;color:#222">1 item</div>
<div class="a" style="left:48.5px;top:433.5px;width:1px;height:10px;background:#e8e8e8"></div>
<div class="t" style="left:55.5px;top:434.2px;color:#222">1 item selected 105 KB</div>
<div class="a" style="left:422.3px;top:430px;width:14.7px;height:16px;border:1px solid #4b97d9;background:#eef6fd"></div>
<svg style="left:424.5px;top:433px" width="11" height="10" viewBox="0 0 11 10"><rect x="0.5" y="0.5" width="2.5" height="2.5" fill="#fff" stroke="#888" stroke-width=".6"/><rect x="0.5" y="4" width="2.5" height="2.5" fill="#fff" stroke="#888" stroke-width=".6"/><rect x="0.5" y="7" width="2.5" height="2.5" fill="#fff" stroke="#c44" stroke-width=".6"/><path d="M4.5 1.5 H6.5 M8 1.5 H10.5" stroke="#9ab" stroke-width="1"/><path d="M4.5 4.5 H6.5 M8 4.5 H10.5 M4.5 7.5 H6.5 M8 7.5 H10.5" stroke="#222" stroke-width="1"/></svg>
<svg style="left:439.2px;top:433.4px" width="10" height="7.5" viewBox="0 0 10 7.5"><rect x="0.5" y="0.5" width="9" height="6.5" fill="#fff" stroke="#777"/><rect x="1.5" y="1.5" width="7" height="0.8" fill="#3a6cc8"/><path d="M1.5 3 H8.5 V6 H1.5Z" fill="#2c3d2c"/><path d="M5 3 H8.5 V6 H3Z" fill="#7aa08a"/></svg>

<!-- drag ghost -->
<div class="a" style="left:455px;top:258.5px;width:67px;height:69.5px;background:linear-gradient(180deg,#eaf2fb 0%,#e0ecf8 50%,#d6e7f7 100%);border:1px solid #e3ecf6;box-shadow:1px 1px 1px rgba(0,0,0,0.15)"></div>
<div class="a" style="left:458.5px;top:271.5px;width:56.5px;height:42px;background:#f7f7f7;border:1px solid #dadada;border-top:1.5px solid #9a9a9a"></div>
<div class="a" style="left:471px;top:278.5px;width:24px;height:31.5px;background:linear-gradient(180deg,#3f90e4,#2f7fdb)"></div>
<svg style="left:461px;top:276px" width="54" height="36" viewBox="0 0 54 36">
 <g fill="#c9c9c9"><rect x="0" y="3" width="2" height="2"/><rect x="0" y="8" width="2" height="2"/><rect x="0" y="13" width="2" height="2"/><rect x="0" y="18" width="2" height="2"/><rect x="0" y="23" width="2" height="2"/></g>
 <g fill="#e6e6e6"><rect x="4" y="3" width="5" height="1"/><rect x="4" y="8" width="5" height="1"/><rect x="4" y="13" width="5" height="1"/><rect x="4" y="18" width="5" height="1"/><rect x="4" y="23" width="5" height="1"/></g>
 <g fill="#e2e2e2"><rect x="36" y="3" width="15" height="1"/><rect x="36" y="6" width="15" height="1"/><rect x="36" y="9" width="15" height="1"/><rect x="36" y="12" width="15" height="1"/><rect x="36" y="15" width="15" height="1"/><rect x="36" y="18" width="15" height="1"/><rect x="36" y="21" width="15" height="1"/><rect x="36" y="24" width="15" height="1"/><rect x="36" y="27" width="9" height="1"/></g>
</svg>
<!-- cursor -->
<svg style="left:486px;top:321px" width="9" height="13" viewBox="0 0 9 13"><path d="M0.5 0.5 V10.5 L3 8.3 L4.8 12 L6.3 11.3 L4.6 7.7 L8 7.5 Z" fill="#fff" stroke="#222" stroke-width=".9"/></svg>
<!-- tooltip -->
<div class="a" style="left:494px;top:329.4px;width:77px;height:13.3px;background:#fff;border:1px solid #666;border-left-color:#333;border-bottom-color:#333"></div>
<svg style="left:497.5px;top:332.5px" width="7" height="7" viewBox="0 0 7 7"><path d="M3.5 0 V7 M0 3.5 H7" stroke="#0b1a66" stroke-width="1.3"/></svg>
<div class="t" style="left:507.7px;top:331px;color:#0b1a66;font-size:8.5px;-webkit-text-stroke:0.25px #0b1a66">Copy to plug-ins</div>

<!-- ================= TASKBAR ================= -->
<div class="a" style="left:5px;top:446px;width:599px;height:20px;background:#05060d"></div>
<div class="a" style="left:35.5px;top:447px;width:230px;height:19px;background:#3a3a3a"></div>
<div class="t" style="left:44px;top:455.6px;font-size:10.4px;line-height:12px;color:#dcdcdc;-webkit-text-stroke:0.1px #dcdcdc">Search the web and Windows</div>
<svg style="left:14px;top:453.8px" width="12" height="11.5" viewBox="0 0 12 11.5"><g fill="#fff"><path d="M0 2 L4.6 1.4 V5.1 H0Z"/><path d="M5.4 1.3 L12 0.2 V5.1 H5.4Z"/><path d="M0 6 H4.6 V9.8 L0 9.2Z"/><path d="M5.4 6 H12 V11.2 L5.4 9.9Z"/></g></svg>
<svg style="left:274px;top:455.5px" width="15" height="11" viewBox="0 0 15 11"><rect x="3.2" y="0.9" width="8.6" height="8.8" fill="none" stroke="#fff" stroke-width="1.6"/><path d="M0.9 2.5 V10 M14.1 2.5 V10" stroke="#fff" stroke-width="1.5"/></svg>
<svg style="left:308px;top:453.5px" width="14" height="13" viewBox="0 0 14 13"><path d="M1 8 C0.5 2.5 5 0.2 8.5 0.6 C12 1 13.6 4 13.5 7.2 H4.6 C4.6 10 7.5 11.2 9.5 11 C10.8 10.9 12 10.5 13 9.8 V12.3 C11.5 13 10 13.2 8.3 13.1 C4 12.8 1.3 11 1 8Z M4.8 5 H9.8 C9.6 3.4 8.6 2.6 7.3 2.6 C6 2.6 5 3.6 4.8 5Z" fill="#1b8de8"/></svg>
<svg style="left:339.3px;top:454.2px" width="14.5" height="12" viewBox="0 0 14.5 12"><path d="M0 0 H5.5 L6.8 1.5 H14.5 V12 H0Z" fill="#e9b949"/><rect x="0" y="2.8" width="14.5" height="9.2" fill="#f9dd7e"/><rect x="0" y="2.8" width="14.5" height="1.2" fill="#fdf0c0"/><rect x="4.2" y="6.5" width="6" height="1.5" fill="#3aa0ea"/><rect x="5.2" y="8" width="4" height="4" fill="#2a8ee0"/></svg>
<svg style="left:372.6px;top:454.2px" width="13" height="12" viewBox="0 0 13 12"><rect x="0" y="0" width="13" height="12" fill="#8fb4d4"/><rect x="1.2" y="1.2" width="10.6" height="10.8" fill="#f4f6f8"/><rect x="0" y="2" width="1.2" height="1" fill="#fff"/><rect x="0" y="5" width="1.2" height="1" fill="#fff"/><rect x="0" y="8" width="1.2" height="1" fill="#fff"/><rect x="11.8" y="2" width="1.2" height="1" fill="#fff"/><rect x="11.8" y="5" width="1.2" height="1" fill="#fff"/><rect x="11.8" y="8" width="1.2" height="1" fill="#fff"/><circle cx="6.5" cy="6.5" r="4" fill="#f0642a"/><path d="M5.3 4.3 L8.6 6.5 L5.3 8.7Z" fill="#fff"/></svg>

</body></html>
